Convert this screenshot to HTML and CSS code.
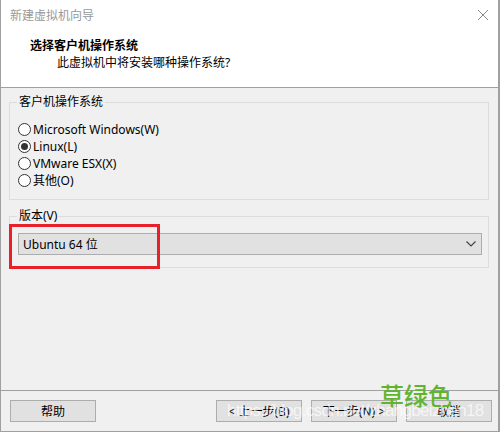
FILE: index.html
```html
<!DOCTYPE html>
<html>
<head>
<meta charset="utf-8">
<link rel="stylesheet" href="styles.css">
</head>
<body>
<div class="window">
  <div class="titlebar">
    <span class="title">新建虚拟机向导</span>
    <svg class="close" width="12" height="12" viewBox="0 0 12 12"><path d="M1 1L11 11M11 1L1 11" stroke="#8a8a8a" stroke-width="1" fill="none"/></svg>
  </div>
  <div class="header">
    <div class="h-title">选择客户机操作系统</div>
    <div class="h-sub">此虚拟机中将安装哪种操作系统?</div>
  </div>
  <div class="body">
    <fieldset class="group group-os">
      <legend>客户机操作系统</legend>
      <div class="radio"><span class="dot"></span>Microsoft Windows(W)</div>
      <div class="radio"><span class="dot on"></span>Linux(L)</div>
      <div class="radio"><span class="dot"></span>VMware ESX(X)</div>
      <div class="radio"><span class="dot"></span>其他(O)</div>
    </fieldset>
    <fieldset class="group group-ver">
      <legend>版本(V)</legend>
      <div class="combo">
        <span>Ubuntu 64 位</span>
        <svg width="10" height="6" viewBox="0 0 10 6"><path d="M0.5 0.5L5 5L9.5 0.5" stroke="#444" stroke-width="1.2" fill="none"/></svg>
      </div>
      <div class="redbox"></div>
    </fieldset>
  </div>
  <div class="footer">
    <button class="btn">帮助</button>
    <div class="spacer"></div>
    <button class="btn">&lt; 上一步(B)</button>
    <button class="btn">下一步(N) &gt;</button>
    <button class="btn">取消</button>
    <div class="mark-green">草绿色</div>
    <div class="mark-url">https://blog.csdn.net/zhangbeizhen18</div>
  </div>
</div>
</body>
</html>
```
FILE: styles.css
```css
* { box-sizing: border-box; }
html, body { margin: 0; padding: 0; }
body {
  font-family: "Noto Sans", "Noto Sans CJK SC", sans-serif;
  font-size: 12px;
  color: #000;
  background: #fff;
}
.window {
  width: 500px;
  height: 432px;
  border: 1px solid #a0a0a0;
  border-top: none;
  border-right-width: 2px;
  background: #f0f0f0;
  display: flex;
  flex-direction: column;
  position: relative;
  overflow: hidden;
}
.titlebar {
  height: 30px;
  background: #fff;
  display: flex;
  align-items: center;
  justify-content: space-between;
  padding: 0 9px 0 9px;
}
.title { color: #999; font-size: 12px; }
.header {
  height: 58px;
  background: #fff;
  border-bottom: 1px solid #a0a0a0;
  padding: 7px 0 0 29px;
}
.h-title { font-weight: bold; line-height: 17px; }
.h-sub { padding-left: 27px; line-height: 17px; }
.body {
  flex: 1;
  padding: 6px 9px 0 8px;
  display: flex;
  flex-direction: column;
}
.group {
  margin: 0;
  border: 1px solid #dcdcdc;
  padding: 0 0 0 8px;
  min-width: 0;
}
.group legend {
  padding: 0 2px;
  margin-left: -1px;
  line-height: 16px;
  color: #000;
}
.group-os { height: 106px; padding-top: 11px; }
.radio {
  display: flex;
  align-items: center;
  height: 17px;
  line-height: 17px;
}
.dot {
  width: 13px;
  height: 13px;
  border: 1px solid #333;
  border-radius: 50%;
  background: #fff;
  margin-right: 2px;
  display: flex;
  align-items: center;
  justify-content: center;
}
.dot.on::after {
  content: "";
  width: 7px;
  height: 7px;
  border-radius: 50%;
  background: #333;
}
.group-ver {
  margin-top: 8px;
  height: 60px;
  position: relative;
  padding-top: 9px;
  padding-right: 6px;
}
.combo {
  height: 22px;
  background: #e1e1e1;
  border: 1px solid #adadad;
  display: flex;
  align-items: center;
  justify-content: space-between;
  padding: 0 5px 0 4px;
}
.redbox {
  position: absolute;
  left: -1px;
  top: 0px;
  width: 151px;
  height: 45px;
  border: 3px solid #e8202a;
}
.footer {
  height: 41px;
  border-top: 1px solid #a0a0a0;
  display: flex;
  align-items: flex-start;
  padding: 9px 6px 0 9px;
  gap: 9px;
  position: relative;
}
.spacer { flex: 1; }
.btn {
  width: 86px;
  height: 22px;
  background: #e1e1e1;
  border: 1px solid #adadad;
  font-family: inherit;
  font-size: 12px;
  color: #000;
  padding: 0;
}
.mark-green {
  position: absolute;
  left: 379px;
  top: -11px;
  font-size: 24px;
  line-height: 30px;
  font-weight: 500;
  color: #5fb52d;
  font-family: "Noto Sans CJK SC", sans-serif;
}
.mark-url {
  position: absolute;
  left: 226px;
  top: 9px;
  font-size: 17px;
  line-height: 22px;
  letter-spacing: -0.7px;
  color: rgba(255,255,255,0.7);
  font-family: "Liberation Sans", sans-serif;
  white-space: nowrap;
}
```
